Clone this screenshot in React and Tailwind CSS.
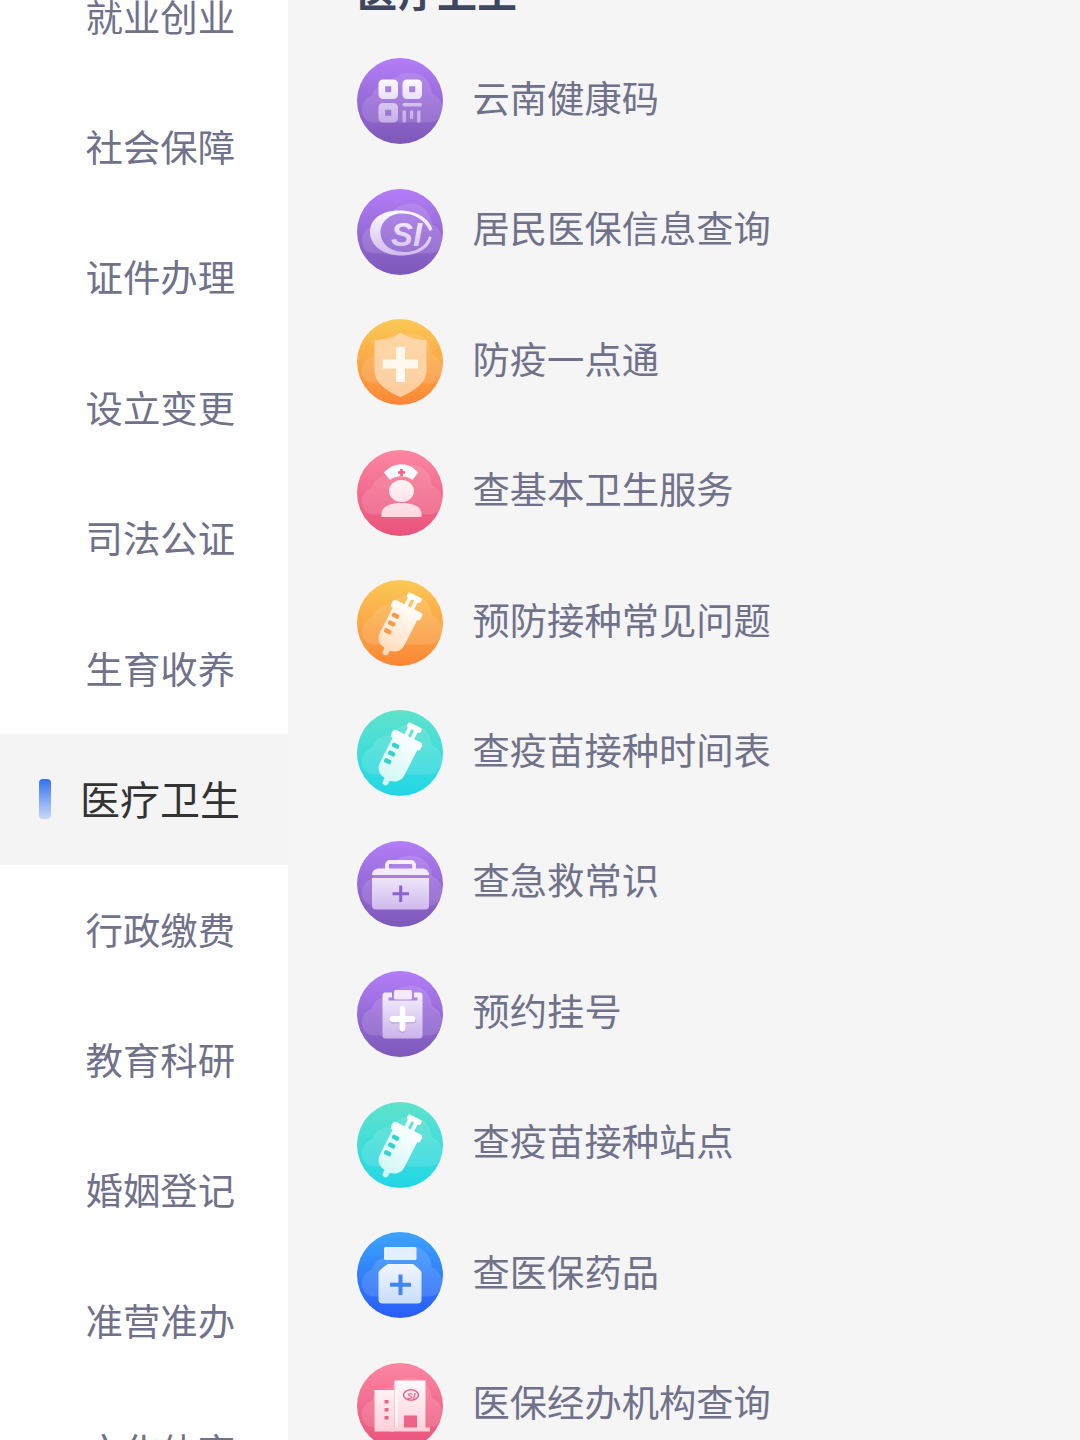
import { useId } from 'react'

const CATEGORIES = [
  '就业创业', '社会保障', '证件办理', '设立变更', '司法公证', '生育收养',
  '医疗卫生', '行政缴费', '教育科研', '婚姻登记', '准营准办', '文化体育',
]

const ACTIVE = '医疗卫生'

const TONES = {
  purple: { from: '#b37df8', to: '#7c58b8', ink: '#8c62cf', shade: '#c9b0ec' },
  orange: { from: '#fbc955', to: '#fb8636', ink: '#f99a44', shade: '#ffdcbc' },
  pink:   { from: '#fb86a2', to: '#e9527b', ink: '#ee6488', shade: '#ffd0db' },
  teal:   { from: '#5fe3cb', to: '#20d7e6', ink: '#35d3cf', shade: '#cff8f6' },
  blue:   { from: '#3ba4fb', to: '#285cf8', ink: '#3f86f3', shade: '#c5dafe' },
}

const SERVICES = [
  { label: '云南健康码',       tone: 'purple', Glyph: QrGlyph },
  { label: '居民医保信息查询', tone: 'purple', Glyph: SiGlyph },
  { label: '防疫一点通',       tone: 'orange', Glyph: ShieldGlyph },
  { label: '查基本卫生服务',   tone: 'pink',   Glyph: NurseGlyph },
  { label: '预防接种常见问题', tone: 'orange', Glyph: SyringeGlyph },
  { label: '查疫苗接种时间表', tone: 'teal',   Glyph: SyringeGlyph },
  { label: '查急救常识',       tone: 'purple', Glyph: KitGlyph },
  { label: '预约挂号',         tone: 'purple', Glyph: ClipboardGlyph },
  { label: '查疫苗接种站点',   tone: 'teal',   Glyph: SyringeGlyph },
  { label: '查医保药品',       tone: 'blue',   Glyph: BottleGlyph },
  { label: '医保经办机构查询', tone: 'pink',   Glyph: BuildingGlyph },
]

function QrGlyph({ fill }) {
  return (
    <g fill={fill}>
      <path fillRule="evenodd" d="M33 29H43.500a4.500 4.500 0 0 1 4.500 4.500V44a4.500 4.500 0 0 1-4.500 4.500H33a4.500 4.500 0 0 1-4.500-4.500V33.500a4.500 4.500 0 0 1 4.500-4.500ZM35.200 35.700v6h6v-6Z" />
      <path fillRule="evenodd" d="M57 29H67.500a4.500 4.500 0 0 1 4.500 4.500V44a4.500 4.500 0 0 1-4.500 4.500H57a4.500 4.500 0 0 1-4.500-4.500V33.500a4.500 4.500 0 0 1 4.500-4.500ZM59.200 35.700v6h6v-6Z" />
      <path fillRule="evenodd" fillOpacity="0.800" d="M33 52.500H43.500a4.500 4.500 0 0 1 4.500 4.500V67.500a4.500 4.500 0 0 1-4.500 4.500H33a4.500 4.500 0 0 1-4.500-4.500V57a4.500 4.500 0 0 1 4.500-4.500ZM35.200 59.200v6h6v-6Z" />
      <g fillOpacity="0.750">
        <rect x="52.500" y="52.500" width="19.500" height="3.500" rx="1.700" />
        <rect x="52.500" y="60" width="3.500" height="12" rx="1" />
        <rect x="60" y="60" width="3.200" height="8.500" rx="1" />
        <rect x="67" y="60" width="3.500" height="12" rx="1" />
      </g>
    </g>
  )
}

function SiGlyph({ fill }) {
  return (
    <g fill={fill}>
      <path d="M82.500 48C79 36 65 29 49 29C31 29 20 38 20 50.500C20 64 33 74 51 74C67 74 80 67 81.500 55.500L79 55C76 65 65 71 54 70.500C40 70 30.500 62 30.500 51C30.500 40 40 32 52 32C64 32 75 38 79.500 49.500Z" />
      <text x="41" y="64.500" fontSize="34" fontWeight="700" fontStyle="italic" fontFamily="Liberation Sans, sans-serif" textLength="31" lengthAdjust="spacingAndGlyphs">SI</text>
    </g>
  )
}

function ShieldGlyph() {
  return (
    <g>
      <path d="M50.500 21C58 26.500 67 28.500 76.500 28.500V59C76.500 71 64 80 50.500 85.500C37 80 24.500 71 24.500 59V28.500C34 28.500 43 26.500 50.500 21Z" fill="#ffdcb8" fillOpacity="0.8" />
      <path d="M46 35.500h9V48h13v9H55V70.500h-9V57H33v-9h13Z" fill="#fff8ee" />
    </g>
  )
}

function NurseGlyph({ fill, ink }) {
  return (
    <g>
      <g fill={fill}>
        <path d="M34 30C44 19 59 19 68 30L62.500 37.500C56 32.500 46 32.500 40 37.500Z" />
        <ellipse cx="51.500" cy="48.500" rx="12.500" ry="11" />
        <path d="M31.500 74.500V70.500C33 63.500 40 60.500 51.500 60.500S70 63.500 71.500 70.500V74.500Z" />
      </g>
      <path d="M50.200 26.500h2.600v2.200H55v2.600h-2.200v2.200h-2.600v-2.200H48v-2.600h2.200Z" fill={ink} />
    </g>
  )
}

function SyringeGlyph({ fill, ink }) {
  return (
    <g transform="translate(-2 1.500) rotate(27 51 51)">
      <g fill={fill}>
        <rect x="44.500" y="17" width="15.500" height="5.500" rx="2.500" />
        <rect x="46.500" y="20" width="3.800" height="13" />
        <rect x="53.500" y="20" width="3.800" height="13" />
        <rect x="34.500" y="30" width="33" height="8.500" rx="3" />
        <path d="M37.500 36H65V66C65 73 61 77 54.500 78V81.500a3 3 0 0 1-6 0V78C41.500 77 37.500 73 37.500 66Z" />
      </g>
      <g fill={ink}>
        <rect x="40" y="42" width="7.500" height="4.500" rx="1.500" />
        <rect x="40" y="50.700" width="7.500" height="4.500" rx="1.500" />
        <rect x="40" y="59.400" width="7.500" height="4.500" rx="1.500" />
      </g>
    </g>
  )
}

function KitGlyph({ fill, ink }) {
  return (
    <g transform="translate(0 0.500)">
      <path d="M37 36V31a3 3 0 0 1 3-3H61a3 3 0 0 1 3 3V36" fill="none" stroke="#f6effd" strokeWidth="3.800" />
      <path d="M22 41C22 37 25 34.500 29 34.500H72C76 34.500 79 37 79 41Z" fill="#f3eafc" />
      <path d="M22 44H79V71.500a4 4 0 0 1-4 4H26a4 4 0 0 1-4-4Z" fill={fill} />
      <path d="M50.700 51.500v16.500M42.500 59.800H59" stroke={ink} strokeWidth="3" />
    </g>
  )
}

function ClipboardGlyph({ fill }) {
  return (
    <g transform="translate(0 0.500)">
      <path d="M35.500 28.500H42V33.500h-3.500v3H67.500v-3h-3.500V28.500H69.500a3 3 0 0 1 3 3V71.500a3 3 0 0 1-3 3H35.500a3 3 0 0 1-3-3V31.500a3 3 0 0 1 3-3Z" fill={fill} fillOpacity="0.900" />
      <rect x="44" y="26" width="18" height="9.500" rx="1.500" fill="#f3eafc" />
      <path d="M52.500 46V66M42.500 56.500H63" stroke="#8a62c8" strokeOpacity="0.250" strokeWidth="6.500" strokeLinecap="round" />
      <path d="M52.500 45V64.500M42.500 55H62.500" stroke="#fff" strokeWidth="6" strokeLinecap="round" />
    </g>
  )
}

function BottleGlyph({ fill, ink }) {
  return (
    <g transform="translate(0 0.500)">
      <rect x="34" y="22" width="32.500" height="13" rx="1.500" fill="#e4effe" />
      <path d="M38 39H63C66 41 69.500 44 71.500 47V74.500a4 4 0 0 1-4 4H32.500a4 4 0 0 1-4-4V47C31 44 34 41 38 39Z" fill={fill} />
      <path d="M50.500 49.500V70M40 59.700H61" stroke={ink} strokeWidth="4" />
    </g>
  )
}

function BuildingGlyph({ fill, ink }) {
  return (
    <g transform="translate(0 -7)">
      <path d="M24.500 41.500H44V83H24.500Z" fill={fill} />
      <path d="M44.500 32H75.500V79H80V83H40V79H44.500Z" fill={fill} />
      <path d="M44.500 42h3.500v37h-3.500Z" fill="#fff" fillOpacity="0.600" />
      <path d="M34.500 51.500h4v3.500h-4ZM34.500 59.500h4V63h-4ZM34.500 67.500h4V71h-4ZM54 67H67V79H54Z" fill={ink} />
      <ellipse cx="61" cy="46.500" rx="7.500" ry="5.200" fill="none" stroke={ink} strokeWidth="1.600" />
      <text x="57" y="50" fontSize="9" fontWeight="700" fontStyle="italic" fontFamily="Liberation Sans, sans-serif" fill={ink}>SI</text>
    </g>
  )
}

function ServiceIcon({ tone, Glyph }) {
  const id = useId()
  const { from, to, ink, shade } = TONES[tone]

  return (
    <svg viewBox="7 7.500 86 86" className="size-[86px] shrink-0">
      <defs>
        <linearGradient id={`${id}-bg`} x1="0" y1="0" x2="0" y2="1">
          <stop offset="0" stopColor={from} />
          <stop offset="1" stopColor={to} />
        </linearGradient>
        <linearGradient id={`${id}-fg`} gradientUnits="userSpaceOnUse" x1="0" y1="26" x2="0" y2="82">
          <stop offset="0" stopColor="#fff" />
          <stop offset="1" stopColor={shade} />
        </linearGradient>
      </defs>
      <circle cx="50" cy="50.500" r="43" fill={`url(#${id}-bg)`} />
      <path
        d="M24 72C16 72 12 66 12 59C12 52 16 47 22 45C24 37 32 32 41 33C44 26 52 22 61 22C73 22 81 31 82 43C89 45 92 52 92 58C92 66 87 72 79 72Z"
        fill="#fff"
        fillOpacity="0.120"
      />
      <Glyph fill={`url(#${id}-fg)`} ink={ink} />
    </svg>
  )
}

function CategoryItem({ label, active }) {
  if (active) {
    return (
      <li className="flex h-[130.45px] items-center bg-[#f4f4f4] pl-[39px]">
        <span className="h-10 w-3 rounded-[4px] bg-linear-to-b from-[#3570ec] to-[#cbd8f5]" />
        <span className="pb-0.5 pl-[29px] text-[40px] text-[#333333]">{label}</span>
      </li>
    )
  }
  return <li className="flex h-[130.45px] items-center pb-px pl-[85.5px] text-[37.4px]">{label}</li>
}

export default function App() {
  return (
    <div className="flex h-[1440px] w-[1080px] overflow-hidden bg-[#f5f5f5] font-['Noto_Sans_CJK_SC',sans-serif] leading-none whitespace-nowrap text-[#6f728a]">
      <nav className="w-72 shrink-0 bg-white">
        <ul className="-mt-[48.500px]">
          {CATEGORIES.map((label) => (
            <CategoryItem key={label} label={label} active={label === ACTIVE} />
          ))}
        </ul>
      </nav>

      <main className="flex-1 pl-[69px]">
        <h2 className="-mt-[30px] h-[66px] text-[40px] font-bold text-[#3f4660]">{ACTIVE}</h2>
        <ul>
          {SERVICES.map(({ label, tone, Glyph }) => (
            <li key={label} className="flex h-[130.45px] items-center">
              <ServiceIcon tone={tone} Glyph={Glyph} />
              <span className="pb-[7.5px] pl-[29.5px] text-[37.3px]">{label}</span>
            </li>
          ))}
        </ul>
      </main>
    </div>
  )
}
